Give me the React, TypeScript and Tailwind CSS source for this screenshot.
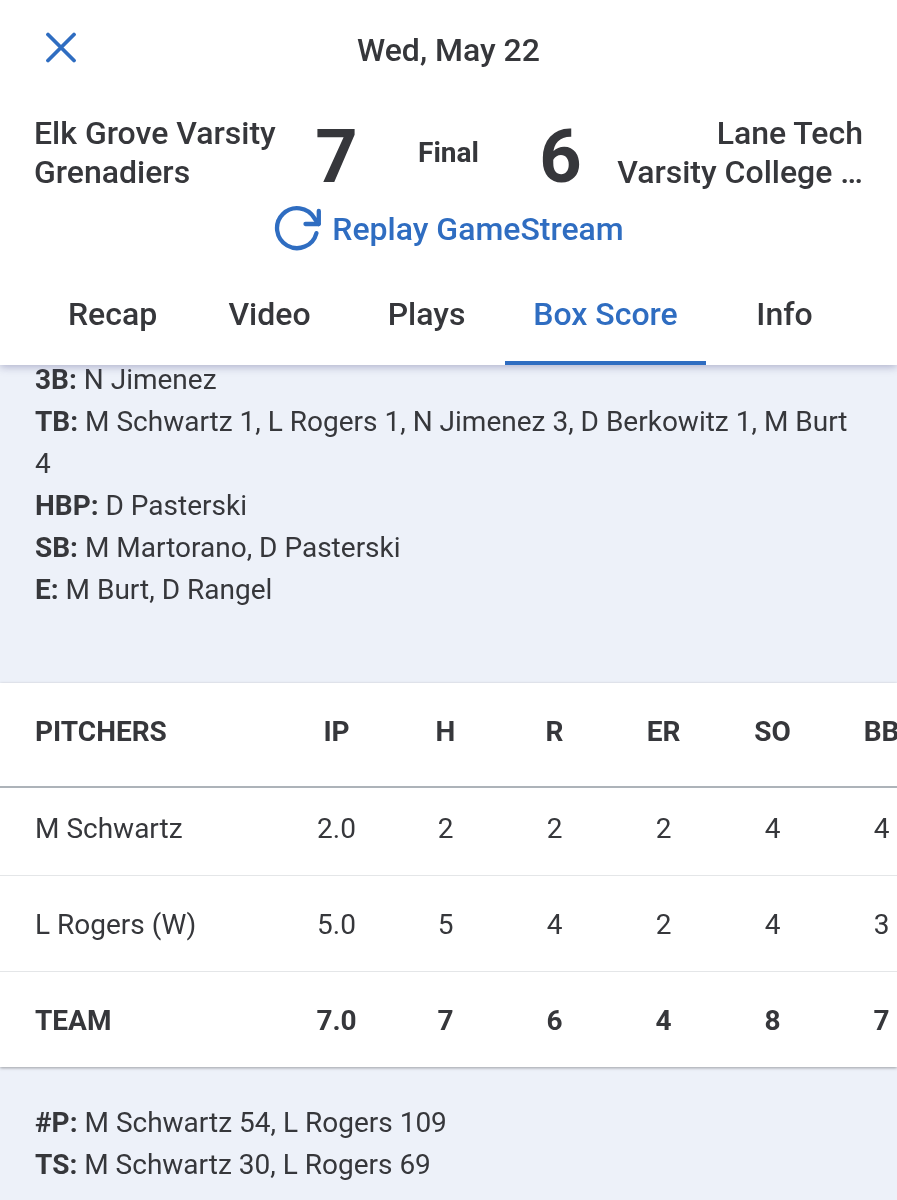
import React from 'react';

const tabs = ['Recap', 'Video', 'Plays', 'Box Score', 'Info'];

const battingNotes = [
  { label: '3B', text: 'N Jimenez' },
  { label: 'TB', text: 'M Schwartz 1, L Rogers 1, N Jimenez 3, D Berkowitz 1, M Burt 4' },
  { label: 'HBP', text: 'D Pasterski' },
  { label: 'SB', text: 'M Martorano, D Pasterski' },
  { label: 'E', text: 'M Burt, D Rangel' },
];

const pitchingNotes = [
  { label: '#P', text: 'M Schwartz 54, L Rogers 109' },
  { label: 'TS', text: 'M Schwartz 30, L Rogers 69' },
];

const columns = ['IP', 'H', 'R', 'ER', 'SO', 'BB'];

const pitchers = [
  { name: 'M Schwartz', stats: ['2.0', '2', '2', '2', '4', '4'] },
  { name: 'L Rogers (W)', stats: ['5.0', '5', '4', '2', '4', '3'] },
];

const team = ['7.0', '7', '6', '4', '8', '7'];

const ReplayIcon: React.FC = () => (
  <svg className="size-12" viewBox="0 1 48 48" fill="none" stroke="currentColor" strokeWidth="4.3" strokeLinecap="round" strokeLinejoin="round" aria-hidden="true">
    <path d="M43.4 29.2A20 20 0 1 1 41.4 14.2L45.5 20" />
    <path d="M45.8 7V20H32.5" />
  </svg>
);

const Notes: React.FC<{ items: { label: string; text: string }[] }> = ({ items }) => (
  <ul className="text-[28px] leading-[42px]">
    {items.map((item) => (
      <li key={item.label}>
        <b className="font-bold">{item.label}:</b> {item.text}
      </li>
    ))}
  </ul>
);

const Header: React.FC = () => (
  <header className="sticky top-0 z-10 bg-white text-[32px] font-medium shadow-[0_2px_8px_rgba(60,60,120,0.35)]">
    <div className="grid h-24 grid-cols-[1fr_auto_1fr] items-center px-[34px]">
      <button type="button" aria-label="Close" className="flex size-[54px] items-center justify-center text-[#2f6dc1]">
        <svg className="size-8" viewBox="0 0 32 32" stroke="currentColor" strokeWidth="3.8" strokeLinecap="round" aria-hidden="true">
          <path d="M3 2.5l26 26M29 2.5l-26 26" />
        </svg>
      </button>
      <h1 className="pt-1 leading-10">Wed, May 22</h1>
    </div>

    <div className="grid grid-cols-[minmax(0,1fr)_112px_112px_112px_minmax(0,1fr)] items-center px-[34px] pt-[14px]">
      <p className="leading-[39px] whitespace-nowrap">
        Elk Grove Varsity
        <br />
        Grenadiers
      </p>
      <span className="pt-2 text-center text-[74px] leading-[78px] font-bold">7</span>
      <span className="text-center text-[28px] leading-[42px] font-bold">Final</span>
      <span className="pt-2 text-center text-[74px] leading-[78px] font-bold">6</span>
      <p className="text-right leading-[39px] whitespace-nowrap">
        Lane Tech
        <br />
        Varsity College …
      </p>
    </div>

    <div className="flex justify-center pt-[9px]">
      <button type="button" className="flex items-center gap-[11px] leading-10 text-[#2f6dc1]">
        <ReplayIcon />
        Replay GameStream
      </button>
    </div>

    <nav className="flex px-[34px] pt-[10px]">
      {tabs.map((tab) =>
        tab === 'Box Score' ? (
          <a key={tab} href="#" aria-current="page" className="w-[201px] border-y-4 border-t-transparent border-b-[#2f6dc1] py-[27px] text-center leading-10 text-[#2f6dc1]">
            {tab}
          </a>
        ) : (
          <a key={tab} href="#" className="flex-1 border-y-4 border-transparent py-[27px] text-center leading-10">
            {tab}
          </a>
        )
      )}
    </nav>
  </header>
);

const PitchersTable: React.FC = () => (
  <div className="overflow-x-auto bg-white shadow-[0_1px_3px_rgba(0,0,0,0.35)] [scrollbar-width:none]">
    <table className="w-[936px] table-fixed border-separate border-spacing-0 text-[28px] leading-[42px]">
      <thead>
        <tr>
          <th className="w-[282px] border-b-2 border-[#adb3b9] pt-7 pb-[33px] pl-[35px] text-left font-bold">PITCHERS</th>
          {columns.map((column) => (
            <th key={column} className="border-b-2 border-[#adb3b9] pt-7 pb-[33px] text-center font-bold">
              {column}
            </th>
          ))}
        </tr>
      </thead>
      <tbody>
        {pitchers.map((pitcher, i) => (
          <tr key={pitcher.name} className={i === 0 ? '[&>*]:pt-5' : '[&>*]:pt-7'}>
            <th className="border-b border-[#e4e6e8] pb-[25px] pl-[35px] text-left font-normal">{pitcher.name}</th>
            {pitcher.stats.map((stat, j) => (
              <td key={columns[j]} className="border-b border-[#e4e6e8] pb-[25px] text-center">
                {stat}
              </td>
            ))}
          </tr>
        ))}
      </tbody>
      <tfoot>
        <tr>
          <th className="pt-7 pb-[25px] pl-[35px] text-left font-bold">TEAM</th>
          {team.map((stat, j) => (
            <td key={columns[j]} className="pt-7 pb-[25px] text-center font-bold">
              {stat}
            </td>
          ))}
        </tr>
      </tfoot>
    </table>
  </div>
);

const App: React.FC = () => {
  return (
    <div className="min-h-screen bg-[#edf1f9] font-[Roboto,sans-serif] text-[#36373b]">
      <Header />
      {/* first line of the notes is partly scrolled under the header */}
      <main className="-mt-1.5">
        <section className="px-[35px] pb-[72px]">
          <Notes items={battingNotes} />
        </section>
        <PitchersTable />
        <section className="px-[35px] pt-[35px] pb-3">
          <Notes items={pitchingNotes} />
        </section>
      </main>
    </div>
  );
};

export default App;
